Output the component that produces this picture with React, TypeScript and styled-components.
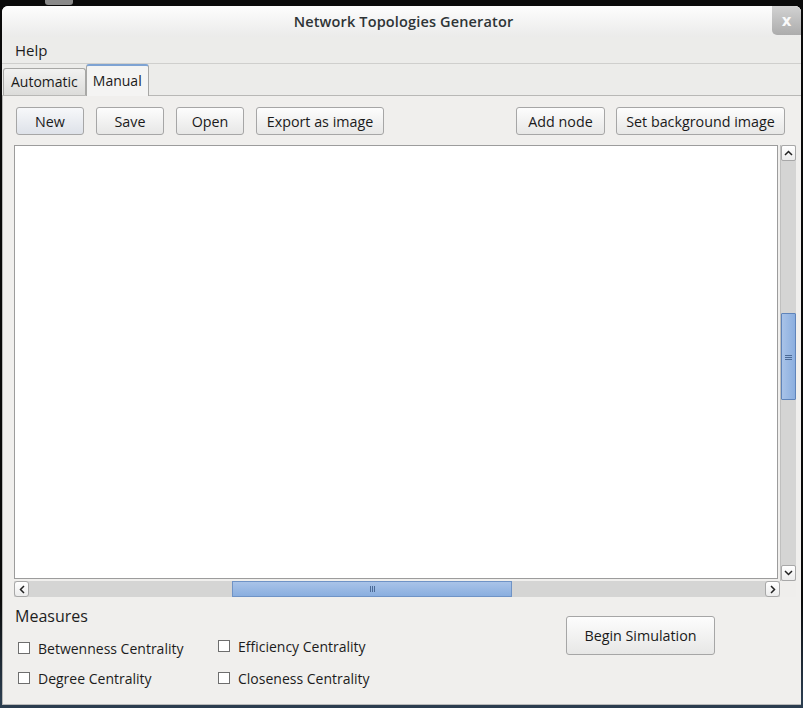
import React from "react";
import styled, { createGlobalStyle } from "styled-components";

const Global = createGlobalStyle`
  html, body { margin: 0; padding: 0; }
  body {
    background: #0c0c0c;
    font-family: "Open Sans", "DejaVu Sans", sans-serif;
    width: 803px;
    height: 708px;
    overflow: hidden;
  }
`;

const Desktop = styled.div`
  width: 803px;
  height: 708px;
  background: linear-gradient(to bottom, #0a0a0a 0, #0a0a0a 600px, #2b3d4f 700px);
  padding: 6px 2px 0 2px;
  box-sizing: border-box;
  position: relative;
`;

const DesktopIcon = styled.div`
  position: absolute;
  left: 45px;
  top: 0;
  width: 28px;
  height: 5px;
  background: #8a8a8a;
  border-radius: 0 0 3px 3px;
`;

const Window = styled.div`
  width: 799px;
  height: 699px;
  background: #efeeec;
  border-radius: 6px 6px 0 0;
  border-bottom: 1px solid #b9b9b9;
  display: flex;
  flex-direction: column;
  overflow: hidden;
  box-sizing: border-box;
`;

const TitleBar = styled.div`
  height: 31px;
  flex: none;
  display: grid;
  grid-template-columns: 1fr auto 1fr;
  align-items: start;
  background: linear-gradient(to bottom, #fdfdfd, #ebebea);
`;

const Title = styled.div`
  grid-column: 2;
  line-height: 31px;
  font-size: 14.5px;
  font-weight: 600;
  color: #2e3436;
  letter-spacing: 0.15px;
  padding-left: 4px;
`;

const CloseButton = styled.div`
  grid-column: 3;
  justify-self: end;
  width: 29px;
  height: 29px;
  background: linear-gradient(to bottom, #d2d2d2, #acacac);
  border-radius: 0 0 0 5px;
  color: #fafafa;
  font-size: 15px;
  font-weight: 700;
  display: flex;
  align-items: center;
  justify-content: center;
  font-family: "DejaVu Sans", sans-serif;
`;

const MenuBar = styled.div`
  height: 26px;
  flex: none;
  display: flex;
  align-items: center;
  padding-left: 13px;
  border-bottom: 1px solid #cfcfcd;
  background: #ececea;
`;

const MenuItem = styled.span`
  font-size: 15px;
  color: #1c1c1c;
`;

const TabBar = styled.div`
  height: 32px;
  flex: none;
  display: flex;
  align-items: flex-end;
  padding-left: 1px;
  border-bottom: 1px solid #b8b8b6;
  background: #ececea;
  box-sizing: border-box;
`;

const Tab = styled.div<{ $active?: boolean }>`
  padding: 0 ${(p) => (p.$active ? "6px" : "7px")} 2px;
  display: flex;
  align-items: center;
  font-size: 14px;
  color: #1a1a1a;
  box-sizing: border-box;
  border: 1px solid #a8a8a6;
  border-bottom: none;
  border-radius: 3px 3px 0 0;
  background: ${(p) => (p.$active ? "#f4f4f3" : "linear-gradient(to bottom, #f2f2f1, #dcdcda)")};
  border-top: ${(p) => (p.$active ? "2px solid #7ea3d3" : "1px solid #a8a8a6")};
  margin-bottom: ${(p) => (p.$active ? "-1px" : "0")};
  height: ${(p) => (p.$active ? "32px" : "27px")};
`;

const Panel = styled.div`
  flex: 1;
  display: flex;
  flex-direction: column;
  padding: 11px 6px 0 11px;
  border-left: 1px solid #b8b8b6;
  background: #f0efed;
`;

const Toolbar = styled.div`
  display: flex;
  align-items: center;
  padding-left: 2px;
  padding-right: 10px;
  height: 28px;
`;

const Group = styled.div<{ $gap: number }>`
  display: flex;
  gap: ${(p) => p.$gap}px;
`;

const Spacer = styled.div`
  flex: 1;
`;

const Button = styled.div<{ $w: number; $h?: number; $focus?: boolean }>`
  width: ${(p) => p.$w}px;
  height: ${(p) => p.$h ?? 28}px;
  box-sizing: border-box;
  border: 1px solid #a6a6a6;
  border-radius: 3px;
  background: ${(p) =>
    p.$focus
      ? "linear-gradient(to bottom, #f7f8fa, #dee2e9)"
      : "linear-gradient(to bottom, #fdfdfd, #e7e7e6)"};
  display: flex;
  align-items: center;
  justify-content: center;
  font-size: 14.3px;
  color: #1a1a1a;
  white-space: nowrap;
`;

const ScrollArea = styled.div`
  margin-top: 10px;
  display: grid;
  grid-template-columns: 766px 16px;
  grid-template-rows: 436px 16px;
  width: 782px;
`;

const Canvas = styled.div`
  background: #ffffff;
  border: 1px solid #9c9c9c;
  box-sizing: border-box;
  width: 764px;
  height: 434px;
`;

const VScroll = styled.div`
  display: flex;
  flex-direction: column;
  background: #d5d5d4;
  border-left: 1px solid #c0c0bf;
  box-sizing: border-box;
  height: 436px;
`;

const VArrow = styled.div`
  height: 16px;
  flex: none;
  background: linear-gradient(to bottom, #ffffff, #ececec);
  border: 1px solid #a8a8a8;
  box-sizing: border-box;
  border-radius: 2px;
  display: flex;
  align-items: center;
  justify-content: center;
`;

const VTrack = styled.div`
  flex: 1;
  display: flex;
  flex-direction: column;
`;

const VGap = styled.div`
  height: 152px;
  flex: none;
`;

const VThumb = styled.div`
  height: 87px;
  background: linear-gradient(to right, #a9c3e8, #8aaedf);
  border: 1px solid #5f84ba;
  box-sizing: border-box;
  border-radius: 1px;
  display: flex;
  align-items: center;
  justify-content: center;
`;

const HScroll = styled.div`
  grid-column: 1;
  display: flex;
  background: #d5d5d4;
  height: 16px;
  width: 766px;
`;

const HGap = styled.div`
  width: 203px;
  flex: none;
`;

const HArrow = styled.div`
  width: 15px;
  flex: none;
  background: linear-gradient(to bottom, #ffffff, #ececec);
  border: 1px solid #a8a8a8;
  box-sizing: border-box;
  border-radius: 3px;
  display: flex;
  align-items: center;
  justify-content: center;
`;

const HThumb = styled.div`
  width: 280px;
  background: linear-gradient(to bottom, #a9c3e8, #8aaedf);
  border: 1px solid #6f93c6;
  box-sizing: border-box;
  display: flex;
  align-items: center;
  justify-content: center;
`;

const Corner = styled.div`
  background: #efeeec;
`;

const Bottom = styled.div`
  display: flex;
  padding-top: 7px;
`;

const Measures = styled.div`
  display: flex;
  flex-direction: column;
  padding-left: 1px;
  width: 538px;
`;

const MeasuresTitle = styled.div`
  font-size: 16px;
  color: #1e1e1e;
  height: 24px;
  line-height: 24px;
`;

const CheckGrid = styled.div`
  display: grid;
  grid-template-columns: 200px 200px;
  row-gap: 8px;
  margin-top: 9px;
  padding-left: 3px;
`;

const CheckRow = styled.label<{ $lift?: boolean }>`
  display: flex;
  align-items: center;
  gap: 8px;
  height: 22px;
  font-size: 14px;
  color: #1c1c1c;
  white-space: nowrap;
  margin-top: ${(p) => (p.$lift ? "-2px" : "0")};
`;

const Box = styled.span`
  width: 12px;
  height: 12px;
  box-sizing: border-box;
  border: 1px solid #6e6e6e;
  background: #ffffff;
  flex: none;
`;

const SimCol = styled.div`
  padding-top: 12px;
  padding-left: 13px;
`;

const Up = () => (
  <svg width="9" height="6" viewBox="0 0 9 6">
    <path d="M1 5 L4.5 1.5 L8 5" stroke="#222" strokeWidth="1.5" fill="none" />
  </svg>
);
const Down = () => (
  <svg width="9" height="6" viewBox="0 0 9 6">
    <path d="M1 1 L4.5 4.5 L8 1" stroke="#222" strokeWidth="1.5" fill="none" />
  </svg>
);
const Left = () => (
  <svg width="6" height="9" viewBox="0 0 6 9">
    <path d="M5 1 L1.5 4.5 L5 8" stroke="#222" strokeWidth="1.5" fill="none" />
  </svg>
);
const Right = () => (
  <svg width="6" height="9" viewBox="0 0 6 9">
    <path d="M1 1 L4.5 4.5 L1 8" stroke="#222" strokeWidth="1.5" fill="none" />
  </svg>
);
const GripH = () => (
  <svg width="7" height="7" viewBox="0 0 7 7">
    <path d="M0 2.5 H7 M0 4.5 H7 M0 6.5 H7" stroke="#4b6a96" strokeWidth="1" />
  </svg>
);
const GripV = () => (
  <svg width="7" height="6" viewBox="0 0 7 6">
    <path d="M1.5 0 V6 M3.5 0 V6 M5.5 0 V6" stroke="#4b6a96" strokeWidth="1" />
  </svg>
);

const checks = [
  { label: "Betwenness Centrality", lift: false },
  { label: "Efficiency Centrality", lift: true },
  { label: "Degree Centrality", lift: false },
  { label: "Closeness Centrality", lift: false },
];

export default function App() {
  return (
    <>
      <Global />
      <Desktop>
        <DesktopIcon />
        <Window>
          <TitleBar>
            <Title>Network Topologies Generator</Title>
            <CloseButton>x</CloseButton>
          </TitleBar>
          <MenuBar>
            <MenuItem>Help</MenuItem>
          </MenuBar>
          <TabBar>
            <Tab>Automatic</Tab>
            <Tab $active>Manual</Tab>
          </TabBar>
          <Panel>
            <Toolbar>
              <Group $gap={12}>
                <Button $w={68} $focus>New</Button>
                <Button $w={68}>Save</Button>
                <Button $w={68}>Open</Button>
                <Button $w={128}>Export as image</Button>
              </Group>
              <Spacer />
              <Group $gap={11}>
                <Button $w={89}>Add node</Button>
                <Button $w={169}>Set background image</Button>
              </Group>
            </Toolbar>
            <ScrollArea>
              <Canvas />
              <VScroll>
                <VArrow><Up /></VArrow>
                <VTrack>
                  <VGap />
                  <VThumb><GripH /></VThumb>
                </VTrack>
                <VArrow><Down /></VArrow>
              </VScroll>
              <HScroll>
                <HArrow><Left /></HArrow>
                <HGap />
                <HThumb><GripV /></HThumb>
                <Spacer />
                <HArrow><Right /></HArrow>
              </HScroll>
              <Corner />
            </ScrollArea>
            <Bottom>
              <Measures>
                <MeasuresTitle>Measures</MeasuresTitle>
                <CheckGrid>
                  {checks.map((c) => (
                    <CheckRow key={c.label} $lift={c.lift}>
                      <Box />
                      {c.label}
                    </CheckRow>
                  ))}
                </CheckGrid>
              </Measures>
              <SimCol>
                <Button $w={149} $h={39}>Begin Simulation</Button>
              </SimCol>
            </Bottom>
          </Panel>
        </Window>
      </Desktop>
    </>
  );
}
